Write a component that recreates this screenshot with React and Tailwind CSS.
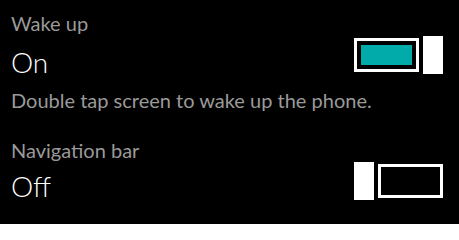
import React, { useState } from "react";

const FONT = { fontFamily: 'Lato, "Open Sans", sans-serif' };

const Toggle = ({ on, onClick }) => (
  <button
    type="button"
    onClick={onClick}
    className="flex items-center gap-[4px] h-[38px] shrink-0"
  >
    {!on && <span className="block w-[20px] h-[38px] bg-white" />}
    <span className="block w-[65px] h-[34px] border-[3px] border-white p-[4px]">
      {on && <span className="block w-full h-full bg-[#00aba9]" />}
    </span>
    {on && <span className="block w-[20px] h-[38px] bg-white" />}
  </button>
);

export default function App() {
  const [wake, setWake] = useState(true);
  const [nav, setNav] = useState(false);

  return (
    <div className="w-[459px] h-[224px] bg-black overflow-hidden pl-[11px] pr-[16px]" style={FONT}>
      <div className="flex items-start justify-between pt-[11px]">
        <div>
          <div className="text-[20px] leading-[24px] text-[#9a9a9a]">Wake up</div>
          <div className="text-[28px] leading-[36px] text-white font-light mt-[9px]">
            {wake ? "On" : "Off"}
          </div>
        </div>
        <div className="mt-[25px]">
          <Toggle on={wake} onClick={() => setWake(!wake)} />
        </div>
      </div>
      <div className="text-[20px] leading-[24px] text-[#9a9a9a] mt-[8px]">
        Double tap screen to wake up the phone.
      </div>
      <div className="flex items-start justify-between mt-[26px]">
        <div>
          <div className="text-[20px] leading-[24px] text-[#9a9a9a]">Navigation bar</div>
          <div className="text-[28px] leading-[36px] text-white font-light mt-[6px]">
            {nav ? "On" : "Off"}
          </div>
        </div>
        <div className="mt-[24px]">
          <Toggle on={nav} onClick={() => setNav(!nav)} />
        </div>
      </div>
    </div>
  );
}
